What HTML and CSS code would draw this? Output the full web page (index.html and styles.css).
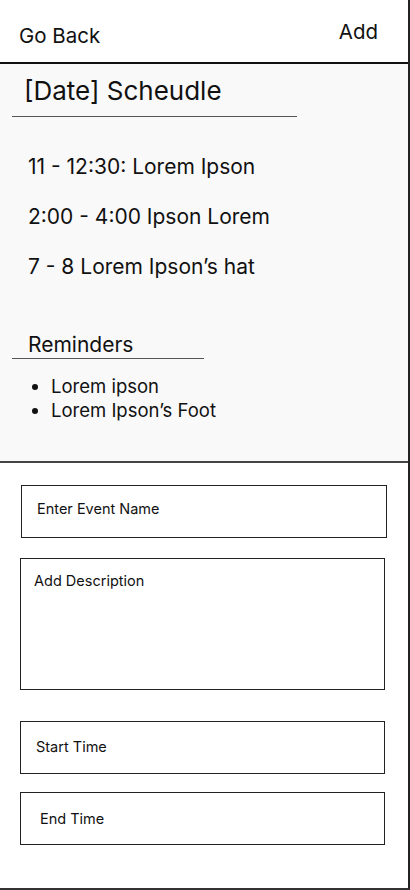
FILE: index.html
```
<!DOCTYPE html>
<html>
<head>
<meta charset="utf-8">
<link rel="stylesheet" href="styles.css">
</head>
<body>
<div class="page">
  <header class="topbar">
    <span class="back">Go Back</span>
    <span class="add">Add</span>
  </header>
  <section class="schedule">
    <div class="title-wrap"><h1 class="title">[Date] Scheudle</h1></div>
    <ul class="events">
      <li>11 - 12:30: Lorem Ipson</li>
      <li>2:00 - 4:00 Ipson Lorem</li>
      <li>7 - 8 Lorem Ipson’s hat</li>
    </ul>
    <div class="rem-wrap"><h2 class="rem-title">Reminders</h2></div>
    <ul class="reminders">
      <li>Lorem ipson</li>
      <li>Lorem Ipson’s Foot</li>
    </ul>
  </section>
  <form class="form">
    <div class="field f-name">Enter Event Name</div>
    <div class="field f-desc">Add Description</div>
    <div class="field f-start">Start Time</div>
    <div class="field f-end">End Time</div>
  </form>
</div>
</body>
</html>
```
FILE: styles.css
```
* { box-sizing: border-box; }
html, body { margin: 0; padding: 0; background: #fff; }
body { font-family: Inter, "Noto Sans", sans-serif; color: #111; }
.page {
  width: 410px;
  height: 890px;
  border-right: 2px solid #222;
  border-bottom: 2px solid #333;
  display: flex;
  flex-direction: column;
}
.topbar {
  height: 64px;
  border-bottom: 2px solid #111;
  display: flex;
  justify-content: space-between;
  align-items: flex-start;
  font-size: 20.5px;
  line-height: 24px;
  padding: 0 30px 0 19px;
}
.back { margin-top: 24px; }
.add { margin-top: 20px; }
.schedule {
  background: #f9f9f9;
  border-bottom: 2px solid #444;
  height: 399px;
  padding-top: 12px;
}
.title-wrap {
  margin-left: 12px;
  width: 285px;
  border-bottom: 1px solid #555;
  padding: 0 0 10px 12px;
}
.title {
  margin: 0;
  font-size: 26px;
  font-weight: 400;
  line-height: 30px;
}
.events {
  list-style: none;
  margin: 25px 0 0;
  padding: 0 0 0 28px;
  font-size: 21px;
  line-height: 50px;
}
.rem-wrap {
  margin: 41px 0 0 12px;
  width: 192px;
  border-bottom: 1px solid #555;
  padding: 0 0 1px 16px;
}
.rem-title {
  margin: 0;
  font-size: 21px;
  font-weight: 400;
  line-height: 24px;
}
.reminders {
  margin: 15px 0 0;
  padding: 0 0 0 51px;
  font-size: 18.5px;
  line-height: 24px;
}
.form {
  display: flex;
  flex-direction: column;
  padding: 22px 0 0 20px;
}
.field {
  border: 1px solid #222;
  width: 366px;
  height: 53px;
  font-size: 14.5px;
  line-height: 17px;
}
.f-name { margin-left: 1px; padding: 14px 0 0 15px; }
.f-desc { margin-top: 20px; height: 132px; width: 365px; padding: 13px 0 0 13px; }
.f-start { margin-top: 31px; width: 365px; padding: 16px 0 0 15px; }
.f-end { margin-top: 18px; width: 365px; padding: 17px 0 0 19px; }
```
